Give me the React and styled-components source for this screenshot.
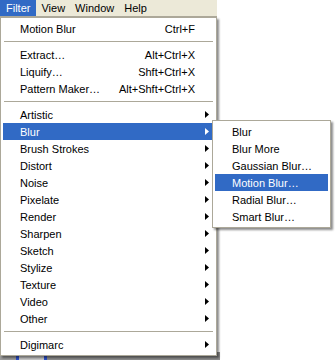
import React from 'react';
import styled, { createGlobalStyle } from 'styled-components';

const GlobalStyle = createGlobalStyle`
  html, body {
    margin: 0;
    padding: 0;
    background: #ffffff;
  }
  body {
    font-family: "Liberation Sans", Arial, sans-serif;
    font-size: 11px;
    color: #000000;
  }
`;

const Screen = styled.div`
  position: relative;
  width: 336px;
  height: 360px;
  overflow: hidden;
  background: #ffffff;
  display: flex;
  flex-direction: column;
`;

const MenuBar = styled.div`
  display: flex;
  width: 217px;
  height: 16px;
  background: #ece9d8;
  border-bottom: 1px solid #aca899;
`;

const BarItem = styled.div`
  display: flex;
  align-items: center;
  padding: 0 5px;
  height: 16px;
  color: ${({ $active }) => ($active ? '#ffffff' : '#000000')};
  background: ${({ $active }) => ($active ? '#316ac5' : 'transparent')};
  cursor: default;

  &:first-child {
    padding: 0 6px;
  }
`;

const Workspace = styled.div`
  flex: 1;
  display: flex;
  flex-direction: column;
  justify-content: flex-end;
`;

const Dock = styled.div`
  width: 220px;
  height: 8px;
  background: linear-gradient(
    90deg,
    #9c9c9c 0 16px,
    #2b4fc9 16px 19px,
    #c9c9c9 19px 44px,
    #2b4fc9 44px 47px,
    #8d8d8d 47px 100%
  );
`;

const Menu = styled.div`
  position: absolute;
  top: ${({ $top }) => $top}px;
  left: ${({ $left }) => $left}px;
  width: ${({ $width }) => $width}px;
  box-sizing: border-box;
  padding: 2px;
  background: #ffffff;
  border: 1px solid #aca899;
  box-shadow: 2px 2px 2px rgba(0, 0, 0, 0.45);
`;

const Row = styled.div`
  display: flex;
  align-items: center;
  height: 17px;
  padding: 0 5px 0 17px;
  white-space: nowrap;
  color: ${({ $active }) => ($active ? '#ffffff' : '#000000')};
  background: ${({ $active }) => ($active ? '#316ac5' : 'transparent')};
`;

const Label = styled.span`
  flex: 1;
`;

const Shortcut = styled.span`
  text-align: right;
`;

const ArrowSlot = styled.span`
  display: flex;
  justify-content: flex-end;
  width: ${({ $width }) => $width}px;
`;

const Separator = styled.div`
  height: 9px;
  display: flex;
  align-items: center;
  padding: 0 1px;

  &::after {
    content: '';
    flex: 1;
    height: 1px;
    background: #aca899;
  }
`;

const Arrow = ({ color }) => (
  <svg width="4" height="7" viewBox="0 0 4 7">
    <polygon points="0,0 4,3.5 0,7" fill={color} />
  </svg>
);

const filterItems = [
  { label: 'Motion Blur', shortcut: 'Ctrl+F' },
  'sep',
  { label: 'Extract...', shortcut: 'Alt+Ctrl+X' },
  { label: 'Liquify...', shortcut: 'Shft+Ctrl+X' },
  { label: 'Pattern Maker...', shortcut: 'Alt+Shft+Ctrl+X' },
  'sep',
  { label: 'Artistic', sub: true },
  { label: 'Blur', sub: true, active: true },
  { label: 'Brush Strokes', sub: true },
  { label: 'Distort', sub: true },
  { label: 'Noise', sub: true },
  { label: 'Pixelate', sub: true },
  { label: 'Render', sub: true },
  { label: 'Sharpen', sub: true },
  { label: 'Sketch', sub: true },
  { label: 'Stylize', sub: true },
  { label: 'Texture', sub: true },
  { label: 'Video', sub: true },
  { label: 'Other', sub: true },
  'sep',
  { label: 'Digimarc', sub: true },
];

const blurItems = [
  { label: 'Blur' },
  { label: 'Blur More' },
  { label: 'Gaussian Blur...' },
  { label: 'Motion Blur...', active: true },
  { label: 'Radial Blur...' },
  { label: 'Smart Blur...' },
];

function MenuList({ items, arrowWidth }) {
  return items.map((item, i) => {
    if (item === 'sep') return <Separator key={i} />;
    return (
      <Row key={i} $active={item.active}>
        <Label>{item.label.replace(/\.\.\.$/, '\u2026')}</Label>
        {item.shortcut && <Shortcut>{item.shortcut}</Shortcut>}
        {arrowWidth > 0 && (
          <ArrowSlot $width={arrowWidth}>
            {item.sub && <Arrow color={item.active ? '#ffffff' : '#000000'} />}
          </ArrowSlot>
        )}
      </Row>
    );
  });
}

export default function App() {
  return (
    <>
      <GlobalStyle />
      <Screen>
        <MenuBar>
          <BarItem $active>Filter</BarItem>
          <BarItem>View</BarItem>
          <BarItem>Window</BarItem>
          <BarItem>Help</BarItem>
        </MenuBar>
        <Workspace>
          <Dock />
        </Workspace>

        <Menu $top={17} $left={0} $width={217}>
          <MenuList items={filterItems} arrowWidth={14} />
        </Menu>

        <Menu $top={120} $left={212} $width={119}>
          <MenuList items={blurItems} arrowWidth={0} />
        </Menu>
      </Screen>
    </>
  );
}
